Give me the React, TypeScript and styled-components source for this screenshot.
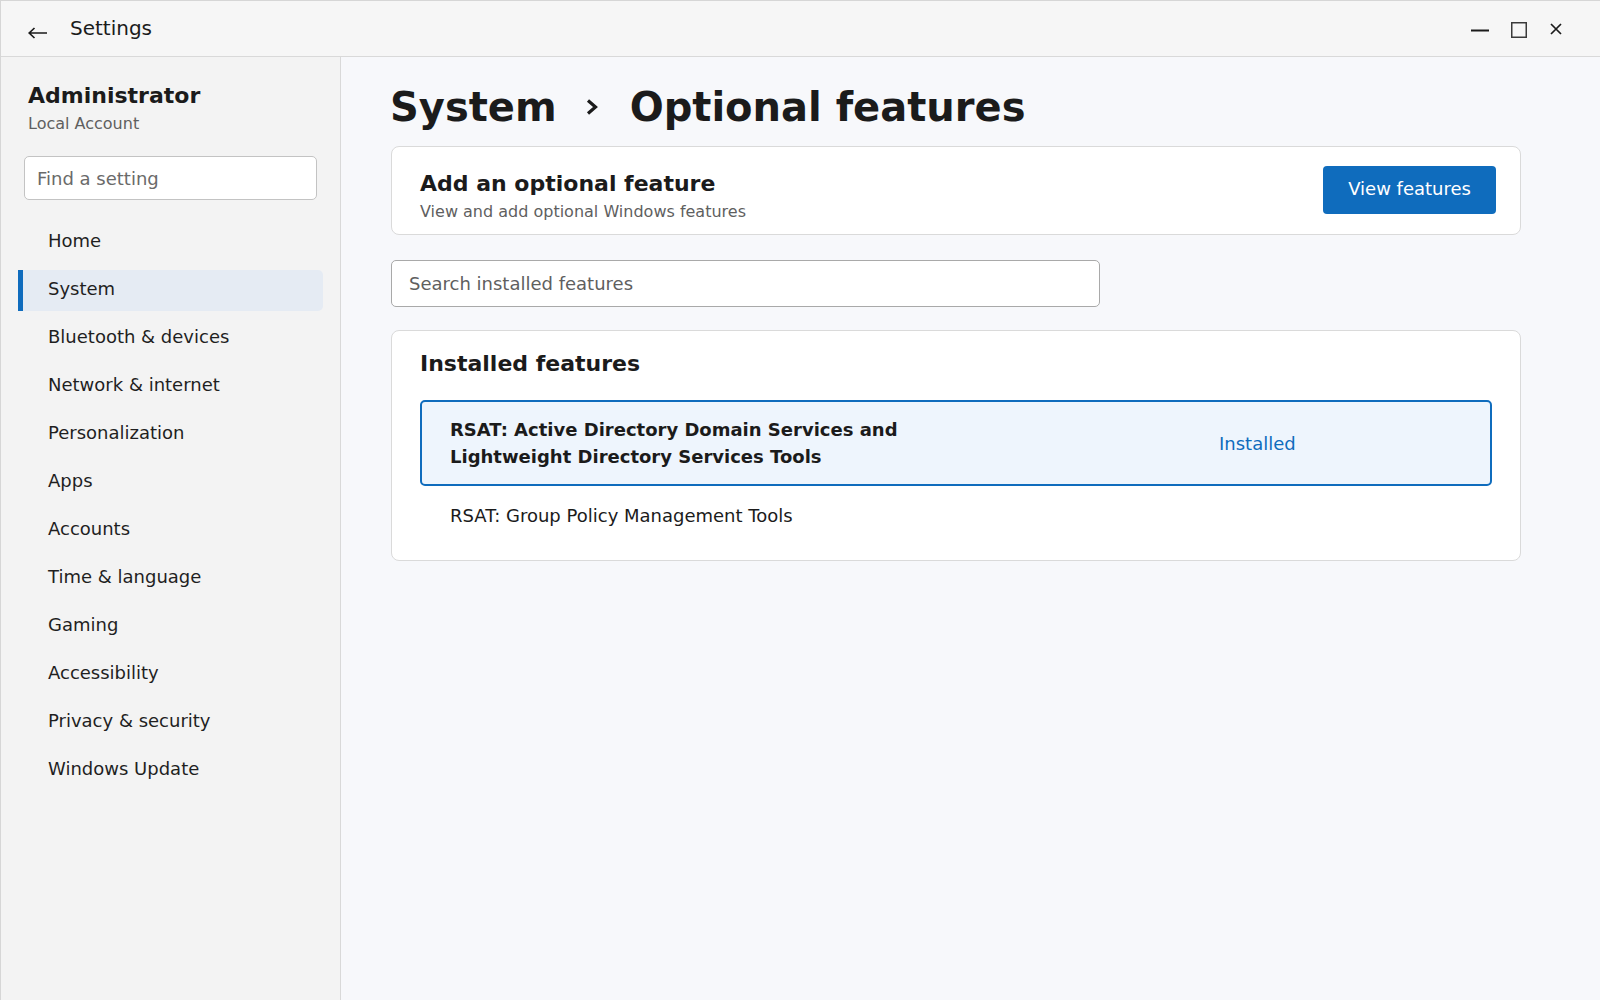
import React, { FunctionComponent } from "react";
import styled, { createGlobalStyle } from "styled-components";

const GlobalStyle = createGlobalStyle`
  * { box-sizing: border-box; }
  html, body {
    margin: 0;
    padding: 0;
    font-family: "DejaVu Sans", "Noto Sans", sans-serif;
    color: #1b1b1b;
  }
`

const Window = styled.div`
  display: flex;
  flex-direction: column;
  height: 100vh;
  border-left: 1px solid #d6d6d6;
  border-top: 1px solid #d6d6d6;
  background: #f7f8fb;
`

const TitleBar = styled.div`
  display: flex;
  align-items: center;
  height: 56px;
  flex-shrink: 0;
  padding-left: 27px;
  background: #f6f6f6;
  border-bottom: 1px solid #d9d9d9;
`

const BackIcon = styled.svg`
  margin-top: 9px;
  margin-right: 22px;
`

const AppTitle = styled.div`
  margin-top: -2px;
  font-size: 20px;
  color: #1b1b1b;
`

const Controls = styled.div`
  display: flex;
  align-items: center;
  margin-left: auto;
  padding-right: 38px;
`

const ControlIcon = styled.svg<{ $shift: number; $gap: number }>`
  margin-top: ${p => p.$shift}px;
  margin-left: ${p => p.$gap}px;
`

const Body = styled.div`
  flex: 1;
  display: flex;
  min-height: 0;
`

const Sidebar = styled.div`
  width: 340px;
  flex-shrink: 0;
  background: #f3f3f3;
  border-right: 1px solid #d9d9d9;
  padding-top: 24px;
`

const UserBlock = styled.div`
  padding-left: 27px;
`

const UserName = styled.div`
  font-size: 22px;
  font-weight: 700;
  line-height: 30px;
`

const UserType = styled.div`
  font-size: 16px;
  line-height: 22px;
  margin-top: 2px;
  color: #5f5f5f;
`

const FindInput = styled.input`
  display: block;
  width: 293px;
  height: 44px;
  margin: 21px 0 0 23px;
  padding: 0 0 0 12px;
  border: 1px solid #c3c3c3;
  border-radius: 5px;
  background: #ffffff;
  font-family: inherit;
  font-size: 18px;
  color: #1b1b1b;
  outline: none;
  &::placeholder { color: #6a6a6a; }
`

const Nav = styled.nav`
  display: flex;
  flex-direction: column;
  gap: 7px;
  margin-top: 22px;
  padding-left: 17px;
`

const NavItem = styled.div<{ $active?: boolean }>`
  display: flex;
  align-items: center;
  width: 305px;
  height: 41px;
  padding: 0 0 5px 25px;
  font-size: 18px;
  color: #1f1f1f;
  border-radius: 0 5px 5px 0;
  background: ${p => (p.$active ? "#e5ebf3" : "transparent")};
  border-left: 5px solid ${p => (p.$active ? "#0f6cbd" : "transparent")};
`

const Main = styled.main`
  flex: 1;
  padding: 22px 79px 0 50px;
  background: #f7f8fb;
`

const PageTitle = styled.h1`
  display: flex;
  align-items: center;
  margin: 0 0 0 -1px;
  height: 56px;
  font-size: 40px;
  font-weight: 700;
  color: #1b1b1b;
`

const Crumb = styled.svg`
  margin: 0 32px 0 29px;
`

const Card = styled.section`
  background: #ffffff;
  border: 1px solid #dadada;
  border-radius: 8px;
`

const AddCard = styled(Card)`
  display: flex;
  justify-content: space-between;
  align-items: flex-start;
  height: 89px;
  margin-top: 11px;
  padding: 20px 24px 0 28px;
`

const CardTitle = styled.div`
  font-size: 22px;
  font-weight: 700;
  line-height: 33px;
`

const CardSub = styled.div`
  font-size: 16px;
  line-height: 24px;
  color: #5f5f5f;
`

const PrimaryButton = styled.button`
  height: 48px;
  margin-top: -1px;
  padding: 0 25px 4px;
  border: none;
  border-radius: 4px;
  background: #0f6cbd;
  color: #ffffff;
  font-family: inherit;
  font-size: 18px;
`

const SearchInput = styled.input`
  display: block;
  width: 709px;
  height: 47px;
  margin-top: 25px;
  padding: 0 0 0 17px;
  border: 1px solid #a9a9a9;
  border-radius: 5px;
  background: #ffffff;
  font-family: inherit;
  font-size: 18px;
  outline: none;
  &::placeholder { color: #5f5f5f; }
`

const InstalledCard = styled(Card)`
  margin-top: 23px;
  padding: 16px 28px 15px;
`

const SectionTitle = styled.div`
  font-size: 22px;
  font-weight: 700;
  line-height: 33px;
  margin-bottom: 20px;
`

const FeatureRow = styled.div<{ $selected?: boolean }>`
  display: grid;
  grid-template-columns: 1fr 243px;
  align-items: center;
  padding: 14px 28px;
  border: 2px solid ${p => (p.$selected ? "#0f6cbd" : "transparent")};
  border-radius: 5px;
  background: ${p => (p.$selected ? "#eef5fd" : "transparent")};
`

const FeatureName = styled.div<{ $selected?: boolean }>`
  max-width: 500px;
  font-size: 18px;
  line-height: 27px;
  font-weight: ${p => (p.$selected ? 700 : 400)};
  color: #1b1b1b;
`

const FeatureStatus = styled.div`
  font-size: 18px;
  line-height: 27px;
  color: #0f6cbd;
`

const navItems = [
  "Home",
  "System",
  "Bluetooth & devices",
  "Network & internet",
  "Personalization",
  "Apps",
  "Accounts",
  "Time & language",
  "Gaming",
  "Accessibility",
  "Privacy & security",
  "Windows Update",
]

const features = [
  { name: "RSAT: Active Directory Domain Services and Lightweight Directory Services Tools", status: "Installed", selected: true },
  { name: "RSAT: Group Policy Management Tools", status: "", selected: false },
]

const App: FunctionComponent = () => {
  return (
    <Window>
      <GlobalStyle />
      <TitleBar>
        <BackIcon width="20" height="12" viewBox="0 0 20 12">
          <path d="M1 6H19M6.5 1L1.2 6L6.5 11" fill="none" stroke="#1b1b1b" strokeWidth="1.7" />
        </BackIcon>
        <AppTitle>Settings</AppTitle>
        <Controls>
          <ControlIcon $shift={0} $gap={0} width="18" height="18" viewBox="0 0 18 18">
            <path d="M0 10.5H18" stroke="#1b1b1b" strokeWidth="2" />
          </ControlIcon>
          <ControlIcon $shift={3} $gap={22} width="16" height="16" viewBox="0 0 16 16">
            <rect x="0.75" y="0.75" width="14.5" height="14.5" fill="none" stroke="#3a3a3a" strokeWidth="1.5" />
          </ControlIcon>
          <ControlIcon $shift={1} $gap={23} width="12" height="12" viewBox="0 0 12 12">
            <path d="M1 1L11 11M11 1L1 11" stroke="#1b1b1b" strokeWidth="1.7" />
          </ControlIcon>
        </Controls>
      </TitleBar>
      <Body>
        <Sidebar>
          <UserBlock>
            <UserName>Administrator</UserName>
            <UserType>Local Account</UserType>
          </UserBlock>
          <FindInput placeholder="Find a setting" />
          <Nav>
            {navItems.map(item => (
              <NavItem key={item} $active={item === "System"}>{item}</NavItem>
            ))}
          </Nav>
        </Sidebar>
        <Main>
          <PageTitle>
            System
            <Crumb width="12" height="16" viewBox="0 0 12 16">
              <path d="M2 1.5L9.5 8L2 14.5" fill="none" stroke="#1b1b1b" strokeWidth="3.2" />
            </Crumb>
            Optional features
          </PageTitle>
          <AddCard>
            <div>
              <CardTitle>Add an optional feature</CardTitle>
              <CardSub>View and add optional Windows features</CardSub>
            </div>
            <PrimaryButton>View features</PrimaryButton>
          </AddCard>
          <SearchInput placeholder="Search installed features" />
          <InstalledCard>
            <SectionTitle>Installed features</SectionTitle>
            {features.map(f => (
              <FeatureRow key={f.name} $selected={f.selected}>
                <FeatureName $selected={f.selected}>{f.name}</FeatureName>
                <FeatureStatus>{f.status}</FeatureStatus>
              </FeatureRow>
            ))}
          </InstalledCard>
        </Main>
      </Body>
    </Window>
  )
}

export default App
